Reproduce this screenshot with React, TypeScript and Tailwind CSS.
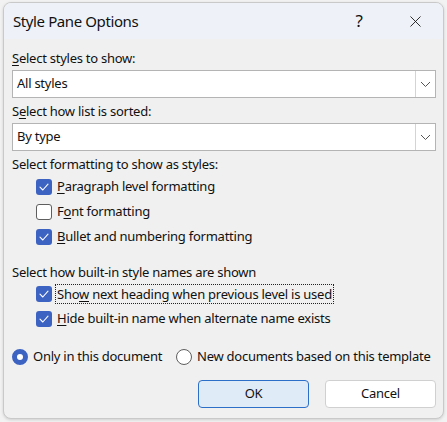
import { X } from 'lucide-react';

const Check = () => (
    <svg width="10" height="8" viewBox="0 0 10 8" fill="none">
        <path d="M1 4.2 L3.8 7 L9 1.2" stroke="white" strokeWidth="1.1" strokeLinecap="round" strokeLinejoin="round" />
    </svg>
);

const Chevron = () => (
    <svg width="11" height="7" viewBox="0 0 11 7" fill="none">
        <path d="M1 1 L5.5 5.5 L10 1" stroke="#555" strokeWidth="1" />
    </svg>
);

const CheckRow = ({ checked, children, focus }: { checked: boolean; children: React.ReactNode; focus?: boolean }) => (
    <div className="flex items-center h-[16px] ml-[24px] whitespace-nowrap">
        {checked ? (
            <span className="w-[16px] h-[16px] rounded-[3px] bg-[#3d63c2] flex items-center justify-center shrink-0">
                <Check />
            </span>
        ) : (
            <span className="w-[16px] h-[16px] rounded-[3px] border border-[#5e5e5e] bg-white shrink-0" />
        )}
        <span
            className={
                focus
                    ? 'ml-[3px] px-[2px] leading-[20px] outline outline-1 outline-dotted outline-[#222] -outline-offset-1'
                    : 'ml-[5px]'
            }
        >
            {children}
        </span>
    </div>
);

const Select = ({ value }: { value: string }) => (
    <div className="h-[28px] w-[424px] flex bg-white border border-[#b4b4b4]">
        <span className="flex-1 flex items-center pl-[4px]">{value}</span>
        <span className="w-[20px] border-l border-[#d4d4d4] flex items-center justify-center">
            <Chevron />
        </span>
    </div>
);

const App = () => {
    return (
        <div
            className="w-[447px] h-[422px] bg-[#f2f2f2] pt-[2px] pl-[3px] text-[13px] tracking-[-0.25px] text-[#111]"
            style={{ fontFamily: '"Noto Sans", "Open Sans", sans-serif' }}
        >
            <div className="w-[441px] h-[417px] rounded-[8px] border border-[#c9c9c9] bg-[#f0f0f0] overflow-hidden flex flex-col shadow-[0_1px_3px_rgba(0,0,0,0.15)]">
                <div className="h-[36px] bg-[#eef2f8] flex items-center pl-[9px] shrink-0">
                    <span className="text-[15px] tracking-[-0.4px] flex-1">Style Pane Options</span>
                    <span className="text-[17px] w-[20px] text-center mr-[37px]">?</span>
                    <X size={19} strokeWidth={1.1} className="mr-[18px]" />
                </div>
                <div className="flex flex-col pl-[8px]">
                    <div className="mt-[9px] leading-[20px]">
                        <span className="underline underline-offset-2">S</span>elect styles to show:
                    </div>
                    <div className="mt-[2px]">
                        <Select value="All styles" />
                    </div>
                    <div className="mt-[3px] leading-[20px]">
                        S<span className="underline underline-offset-2">e</span>lect how list is sorted:
                    </div>
                    <div className="mt-[2px]">
                        <Select value="By type" />
                    </div>
                    <div className="mt-[3px] leading-[20px]">Select formatting to show as styles:</div>
                    <div className="mt-[5px] flex flex-col gap-[9px]">
                        <CheckRow checked>
                            <span className="underline underline-offset-2">P</span>aragraph level formatting
                        </CheckRow>
                        <CheckRow checked={false}>
                            F<span className="underline underline-offset-2">o</span>nt formatting
                        </CheckRow>
                        <CheckRow checked>
                            <span className="underline underline-offset-2">B</span>ullet and numbering formatting
                        </CheckRow>
                    </div>
                    <div className="mt-[17px] leading-[20px]">Select how built-in style names are shown</div>
                    <div className="mt-[4px] flex flex-col gap-[9px]">
                        <CheckRow checked focus>
                            Sho<span className="underline underline-offset-2">w</span> next heading when previous level is used
                        </CheckRow>
                        <CheckRow checked>
                            <span className="underline underline-offset-2">H</span>ide built-in name when alternate name exists
                        </CheckRow>
                    </div>
                    <div className="mt-[22px] flex items-center h-[16px] whitespace-nowrap">
                        <span className="w-[16px] h-[16px] rounded-full border-[5px] border-[#3d63c2] bg-white shrink-0" />
                        <span className="ml-[5px] w-[143px]">Only in this document</span>
                        <span className="w-[16px] h-[16px] rounded-full border border-[#5e5e5e] bg-white shrink-0" />
                        <span className="ml-[5px]">New documents based on this template</span>
                    </div>
                    <div className="mt-[15px] flex justify-end gap-[16px] pr-[7px]">
                        <button className="w-[111px] h-[28px] rounded-[4px] bg-[#e0ebf8] border border-[#2b6fc9]">OK</button>
                        <button className="w-[111px] h-[28px] rounded-[4px] bg-white border border-[#d0d0d0]">Cancel</button>
                    </div>
                </div>
            </div>
        </div>
    );
};

export default App;
